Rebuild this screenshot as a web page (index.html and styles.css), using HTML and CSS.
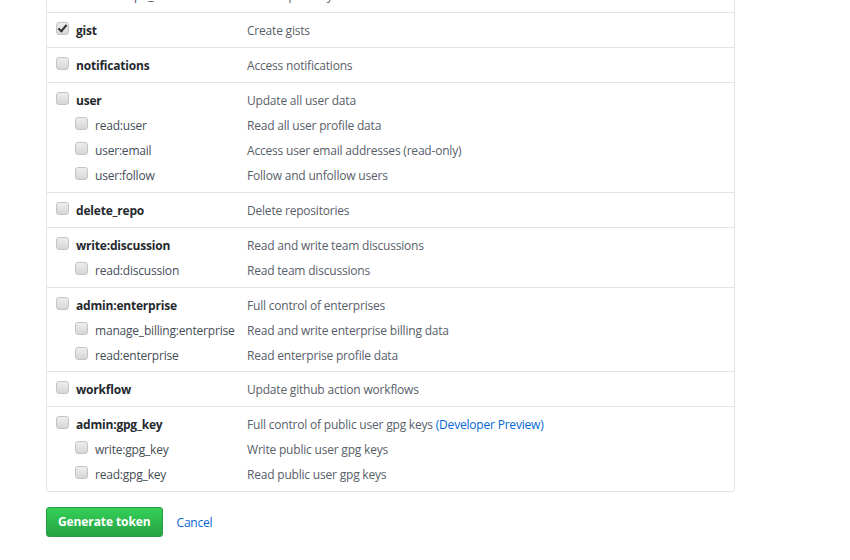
FILE: index.html
```html
<!DOCTYPE html>
<html lang="en">
<head>
    <meta charset="UTF-8">
    <title>New personal access token</title>
    <link rel="stylesheet" href="styles.css">
</head>
<body>

<form class="token-form">
    <div class="scopes">
        <div class="scope-group">
            <div class="scope-line">
                <label class="scope-name"><input type="checkbox"> admin:repo_hook</label>
                <span class="scope-desc">Full control of repository hooks</span>
            </div>
            <div class="scope-line sub">
                <label class="scope-name"><input type="checkbox"> write:repo_hook</label>
                <span class="scope-desc">Write repository hooks</span>
            </div>
            <div class="scope-line sub">
                <label class="scope-name"><input type="checkbox"> read:repo_hook</label>
                <span class="scope-desc">Read repository hooks</span>
            </div>
        </div>

        <div class="scope-group">
            <div class="scope-line">
                <label class="scope-name"><input type="checkbox" checked> gist</label>
                <span class="scope-desc">Create gists</span>
            </div>
        </div>

        <div class="scope-group">
            <div class="scope-line">
                <label class="scope-name"><input type="checkbox"> notifications</label>
                <span class="scope-desc">Access notifications</span>
            </div>
        </div>

        <div class="scope-group">
            <div class="scope-line">
                <label class="scope-name"><input type="checkbox"> user</label>
                <span class="scope-desc">Update all user data</span>
            </div>
            <div class="scope-line sub">
                <label class="scope-name"><input type="checkbox"> read:user</label>
                <span class="scope-desc">Read all user profile data</span>
            </div>
            <div class="scope-line sub">
                <label class="scope-name"><input type="checkbox"> user:email</label>
                <span class="scope-desc">Access user email addresses (read-only)</span>
            </div>
            <div class="scope-line sub">
                <label class="scope-name"><input type="checkbox"> user:follow</label>
                <span class="scope-desc">Follow and unfollow users</span>
            </div>
        </div>

        <div class="scope-group">
            <div class="scope-line">
                <label class="scope-name"><input type="checkbox"> delete_repo</label>
                <span class="scope-desc">Delete repositories</span>
            </div>
        </div>

        <div class="scope-group">
            <div class="scope-line">
                <label class="scope-name"><input type="checkbox"> write:discussion</label>
                <span class="scope-desc">Read and write team discussions</span>
            </div>
            <div class="scope-line sub">
                <label class="scope-name"><input type="checkbox"> read:discussion</label>
                <span class="scope-desc">Read team discussions</span>
            </div>
        </div>

        <div class="scope-group short">
            <div class="scope-line">
                <label class="scope-name"><input type="checkbox"> admin:enterprise</label>
                <span class="scope-desc">Full control of enterprises</span>
            </div>
            <div class="scope-line sub">
                <label class="scope-name"><input type="checkbox"> manage_billing:enterprise</label>
                <span class="scope-desc">Read and write enterprise billing data</span>
            </div>
            <div class="scope-line sub">
                <label class="scope-name"><input type="checkbox"> read:enterprise</label>
                <span class="scope-desc">Read enterprise profile data</span>
            </div>
        </div>

        <div class="scope-group">
            <div class="scope-line">
                <label class="scope-name"><input type="checkbox"> workflow</label>
                <span class="scope-desc">Update github action workflows</span>
            </div>
        </div>

        <div class="scope-group">
            <div class="scope-line">
                <label class="scope-name"><input type="checkbox"> admin:gpg_key</label>
                <span class="scope-desc">Full control of public user gpg keys <a href="#">(Developer Preview)</a></span>
            </div>
            <div class="scope-line sub">
                <label class="scope-name"><input type="checkbox"> write:gpg_key</label>
                <span class="scope-desc">Write public user gpg keys</span>
            </div>
            <div class="scope-line sub">
                <label class="scope-name"><input type="checkbox"> read:gpg_key</label>
                <span class="scope-desc">Read public user gpg keys</span>
            </div>
        </div>
    </div>

    <div class="form-actions">
        <button type="button" class="btn-primary">Generate token</button>
        <a href="#" class="cancel">Cancel</a>
    </div>
</form>

</body>
</html>
```

FILE: styles.css
```css
body {
    margin: 0;
    background: #fff;
    font-family: "Open Sans", "Noto Sans", sans-serif;
    font-size: 12px;
    letter-spacing: -0.2px;
    color: #24292e;
}
.token-form {
    margin: -73px 0 0 46px;
    width: 689px;
}
.scopes {
    border: 1px solid #e1e4e8;
    border-radius: 3px;
}
.scope-group {
    padding: 9px 9px 7px;
    border-top: 1px solid #e1e4e8;
}
.scope-group.short {
    padding-bottom: 6px;
}
.scope-group:first-child {
    border-top: 0;
}
.scope-line {
    display: grid;
    grid-template-columns: 191px 1fr;
    line-height: 18px;
}
.scope-line.sub {
    margin-top: 7px;
}
.scope-name {
    display: flex;
    align-items: center;
    font-weight: 700;
    color: #24292e;
}
.sub .scope-name {
    padding-left: 19px;
    font-weight: 400;
    color: #444d56;
}
.scope-desc {
    color: #586069;
}
.scope-desc a {
    color: #0366d6;
    text-decoration: none;
}

/* windows-ish grey checkbox */
.scope-name input {
    appearance: none;
    -webkit-appearance: none;
    position: relative;
    width: 13px;
    height: 13px;
    margin: -6px 7px 0 0;
    border: 1px solid #c4c4c4;
    border-radius: 3px;
    background: linear-gradient(#eeeeee, #d6d6d6);
    flex-shrink: 0;
}
.scope-name input:checked::after {
    content: "";
    position: absolute;
    left: 3px;
    top: 0;
    width: 3px;
    height: 7px;
    border: solid #333;
    border-width: 0 2px 2px 0;
    transform: rotate(40deg);
}

.form-actions {
    display: flex;
    align-items: center;
    margin-top: 15px;
}
.btn-primary {
    font-family: inherit;
    font-size: 12px;
    font-weight: 700;
    letter-spacing: -0.1px;
    line-height: 18px;
    color: #fff;
    padding: 5px 11px;
    border: 1px solid #2a9a44;
    border-radius: 3px;
    background: linear-gradient(#34d058, #28a745 90%);
    cursor: pointer;
}
.cancel {
    margin-left: 14px;
    font-size: 12px;
    color: #0366d6;
    text-decoration: none;
}
```
